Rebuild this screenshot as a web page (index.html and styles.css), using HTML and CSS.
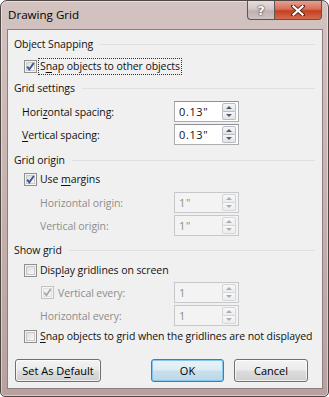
FILE: index.html
```html
<!DOCTYPE html>
<html>
<head>
<meta charset="utf-8">
<link rel="stylesheet" href="styles.css">
</head>
<body>
<div class="window">
  <div class="titlebar">
    <span class="title">Drawing Grid</span>
    <div class="caption-btns">
      <div class="cbtn help">?</div>
      <div class="cbtn close">
        <svg width="14" height="11" viewBox="0 0 14 11"><path d="M2 1 L12 10 M12 1 L2 10" stroke="#5a2a22" stroke-width="4" stroke-linecap="square"/><path d="M2.5 1.5 L11.5 9.5 M11.5 1.5 L2.5 9.5" stroke="#ffffff" stroke-width="2.2" stroke-linecap="square"/></svg>
      </div>
    </div>
  </div>
  <div class="client">
    <div class="group-head mt6"><span>Object Snapping</span><i class="rule"></i></div>
    <div class="check-row mt6">
      <span class="cb"><svg width="13" height="13" viewBox="0 0 13 13"><defs><linearGradient id="g1" x1="0" y1="0" x2="1" y2="1"><stop offset="0" stop-color="#dcdcdc"/><stop offset="1" stop-color="#fbfbfb"/></linearGradient></defs><rect x="0.5" y="0.5" width="12" height="12" fill="#f4f4f4" stroke="#8e8f8f"/><rect x="2.5" y="2.5" width="8" height="8" fill="url(#g1)" stroke="#c9c9c9"/><path d="M3.2 6.6 L5.3 9.3 L9.8 3" fill="none" stroke="#3e5592" stroke-width="1.9"/></svg></span>
      <span class="label focus">S<u>n</u>ap objects to other objects</span>
    </div>

    <div class="group-head mt6"><span>Grid settings</span><i class="rule"></i></div>
    <div class="spin-row mt5">
      <span class="field-label w152">Hori<u>z</u>ontal spacing:</span>
      <div class="spin"><span class="spin-val">0.13"</span><span class="spin-btns"><span class="sb up"></span><span class="sb down"></span></span></div>
    </div>
    <div class="spin-row mt2">
      <span class="field-label w152"><u>V</u>ertical spacing:</span>
      <div class="spin"><span class="spin-val">0.13"</span><span class="spin-btns"><span class="sb up"></span><span class="sb down"></span></span></div>
    </div>

    <div class="group-head mt7"><span>Grid origin</span><i class="rule"></i></div>
    <div class="check-row mt3">
      <span class="cb"><svg width="13" height="13" viewBox="0 0 13 13"><rect x="0.5" y="0.5" width="12" height="12" fill="#f4f4f4" stroke="#8e8f8f"/><rect x="2.5" y="2.5" width="8" height="8" fill="url(#g1)" stroke="#c9c9c9"/><path d="M3.2 6.6 L5.3 9.3 L9.8 3" fill="none" stroke="#3e5592" stroke-width="1.9"/></svg></span>
      <span class="label">Use <u>m</u>argins</span>
    </div>
    <div class="spin-row mt5">
      <span class="field-label w134 disabled">Horizontal origin:</span>
      <div class="spin disabled"><span class="spin-val">1"</span><span class="spin-btns"><span class="sb up"></span><span class="sb down"></span></span></div>
    </div>
    <div class="spin-row mt2">
      <span class="field-label w134 disabled">Vertical origin:</span>
      <div class="spin disabled"><span class="spin-val">1"</span><span class="spin-btns"><span class="sb up"></span><span class="sb down"></span></span></div>
    </div>

    <div class="group-head mt6"><span>Show grid</span><i class="rule"></i></div>
    <div class="check-row mt4">
      <span class="cb"><svg width="13" height="13" viewBox="0 0 13 13"><rect x="0.5" y="0.5" width="12" height="12" fill="#f4f4f4" stroke="#8e8f8f"/><rect x="2.5" y="2.5" width="8" height="8" fill="url(#g1)" stroke="#c9c9c9"/></svg></span>
      <span class="label">Disp<u>l</u>ay gridlines on screen</span>
    </div>
    <div class="spin-row mt4">
      <span class="field-check w133 disabled">
        <span class="cb"><svg width="13" height="13" viewBox="0 0 13 13"><rect x="0.5" y="0.5" width="12" height="12" fill="#f6f6f6" stroke="#c2c2c2"/><rect x="2.5" y="2.5" width="8" height="8" fill="#f2f2f2" stroke="#e0e0e0"/><path d="M3.2 6.6 L5.3 9.3 L9.8 3" fill="none" stroke="#a5a5a5" stroke-width="1.6"/></svg></span>
        <span class="label">Vertical every:</span>
      </span>
      <div class="spin disabled"><span class="spin-val">1</span><span class="spin-btns"><span class="sb up"></span><span class="sb down"></span></span></div>
    </div>
    <div class="spin-row mt2">
      <span class="field-label w134 disabled">Horizontal every:</span>
      <div class="spin disabled"><span class="spin-val">1</span><span class="spin-btns"><span class="sb up"></span><span class="sb down"></span></span></div>
    </div>
    <div class="check-row mt2">
      <span class="cb"><svg width="13" height="13" viewBox="0 0 13 13"><rect x="0.5" y="0.5" width="12" height="12" fill="#f4f4f4" stroke="#8e8f8f"/><rect x="2.5" y="2.5" width="8" height="8" fill="url(#g1)" stroke="#c9c9c9"/></svg></span>
      <span class="label"><u>S</u>nap objects to grid when the gridlines are not displayed</span>
    </div>

    <div class="button-row">
      <div class="btn w85">Set As D<u>e</u>fault</div>
      <div class="btn default w73">OK</div>
      <div class="btn w74">Cancel</div>
    </div>
  </div>
</div>
</body>
</html>
```

FILE: styles.css
```css
html, body {
  margin: 0;
  padding: 0;
  background: #ffffff;
}
body {
  font-family: "Open Sans", "Noto Sans", "Liberation Sans", sans-serif;
  font-size: 10.5px;
  letter-spacing: -0.08px;
  color: #111111;
}
u {
  text-decoration: underline;
  text-underline-offset: 2px;
}
.window {
  width: 329px;
  height: 397px;
  box-sizing: border-box;
  border: 1px solid #4e4746;
  border-radius: 7px 7px 5px 5px;
  background: linear-gradient(to bottom, #d3c3c0 0%, #c9b5b2 40%, #b8a19e 100%);
  box-shadow: inset 0 0 0 1px rgba(255,255,255,0.45);
  padding: 0 5px 7px 6px;
  display: flex;
  flex-direction: column;
  overflow: hidden;
}
.titlebar {
  height: 28px;
  display: flex;
  align-items: flex-start;
  flex: none;
}
.title {
  margin-left: 1px;
  margin-top: 6px;
  font-size: 11.6px;
  letter-spacing: 0;
  color: #000000;
}
.caption-btns {
  margin-left: auto;
  margin-right: 1px;
  display: flex;
}
.cbtn {
  height: 19px;
  box-sizing: border-box;
  border: 1px solid #5f5452;
  border-top: none;
  display: flex;
  align-items: center;
  justify-content: center;
}
.help {
  width: 27px;
  border-right: none;
  border-radius: 0 0 0 4px;
  background: linear-gradient(to bottom, #e6dcdb 0%, #d4c8c6 45%, #bfb2b0 55%, #cdc3c1 100%);
  color: #ffffff;
  font-family: "DejaVu Sans", sans-serif;
  font-weight: bold;
  font-size: 13px;
  text-shadow: 0 0 2px #3b3030, 0 0 1px #3b3030;
}
.close {
  width: 48px;
  border-radius: 0 0 4px 0;
  background: linear-gradient(to bottom, #e7a091 0%, #d66e57 45%, #c4401f 55%, #d46a4e 100%);
}
.client {
  flex: 1;
  background: #f0f0f0;
  border: 1px solid #8d7f7d;
  padding: 0 6px 0 6px;
  display: flex;
  flex-direction: column;
}
.mt2 { margin-top: 2px; }
.mt3 { margin-top: 3px; }
.mt4 { margin-top: 4px; }
.mt5 { margin-top: 5px; }
.mt6 { margin-top: 6px; }
.mt7 { margin-top: 7px; }

.group-head {
  height: 16px;
  display: flex;
  align-items: center;
  margin-right: 1px;
}
.group-head span {
  white-space: nowrap;
}
.rule {
  flex: 1;
  height: 1px;
  background: #dde1e6;
  margin-left: 7px;
}
.check-row {
  height: 16px;
  display: flex;
  align-items: center;
  padding-left: 10px;
}
.cb {
  width: 13px;
  height: 13px;
  display: flex;
  flex: none;
}
.check-row .label {
  margin-left: 3px;
  white-space: nowrap;
}
.focus {
  outline: 1px dotted #333333;
  outline-offset: 0;
  padding: 0 1px;
  margin-left: 2px !important;
  line-height: 15px;
}
.spin-row {
  height: 21px;
  display: flex;
  align-items: center;
}
.field-label {
  white-space: nowrap;
  box-sizing: border-box;
}
.w152 { width: 160px; padding-left: 8px; }
.w134 { width: 160px; padding-left: 26px; }
.w133 { width: 160px; padding-left: 27px; }
.field-check {
  display: flex;
  align-items: center;
  box-sizing: border-box;
}
.field-check .label {
  margin-left: 4px;
}
.disabled {
  color: #8d8d8d;
}
.spin {
  width: 65px;
  height: 21px;
  box-sizing: border-box;
  border: 1px solid #abadb3;
  border-top-color: #8e9097;
  background: #ffffff;
  display: flex;
  align-items: center;
  padding: 1px 2px 1px 4px;
}
.spin.disabled {
  background: #f3f3f3;
  border-color: #c7c8cc;
  color: #8d8d8d;
}
.spin-val {
  flex: 1;
  letter-spacing: 0.6px;
  font-size: 11px;
}
.spin-btns {
  width: 14px;
  height: 17px;
  display: flex;
  flex-direction: column;
}
.sb {
  flex: 1;
  box-sizing: border-box;
  border: 1px solid #b9bcc2;
  background: linear-gradient(to bottom, #f7f7f7, #e2e3e6);
  display: flex;
  align-items: center;
  justify-content: center;
}
.sb.up { border-radius: 2px 2px 0 0; }
.sb.down { border-radius: 0 0 2px 2px; border-top: none; }
.sb::after {
  content: "";
  width: 0;
  height: 0;
  border-left: 3px solid transparent;
  border-right: 3px solid transparent;
}
.sb.up::after { border-bottom: 3px solid #4a5a7a; }
.sb.down::after { border-top: 3px solid #4a5a7a; }
.spin.disabled .sb { border-color: #d5d6d9; background: linear-gradient(to bottom, #f8f8f8, #ececec); }
.spin.disabled .sb.up::after { border-bottom-color: #a8adb8; }
.spin.disabled .sb.down::after { border-top-color: #a8adb8; }

.button-row {
  margin-top: 15px;
  display: flex;
  padding-left: 1px;
}
.btn {
  height: 23px;
  box-sizing: border-box;
  border: 1px solid #707070;
  border-radius: 3px;
  background: linear-gradient(to bottom, #f3f3f3 0%, #ebebeb 48%, #dddddd 52%, #cfcfcf 100%);
  box-shadow: inset 0 0 0 1px rgba(255,255,255,0.7);
  display: flex;
  align-items: center;
  justify-content: center;
  font-size: 11px;
  letter-spacing: 0;
  color: #000;
}
.w85 { width: 86px; }
.w73 { width: 73px; margin-left: auto; }
.w74 { width: 74px; margin-left: 10px; margin-right: 8px; }
.btn.default {
  border-color: #3c7fb1;
  background: linear-gradient(to bottom, #e9f4fa 0%, #dcebf4 48%, #c9dfec 52%, #bcd7e8 100%);
  box-shadow: inset 0 0 0 1px #84c7ea;
}
```
